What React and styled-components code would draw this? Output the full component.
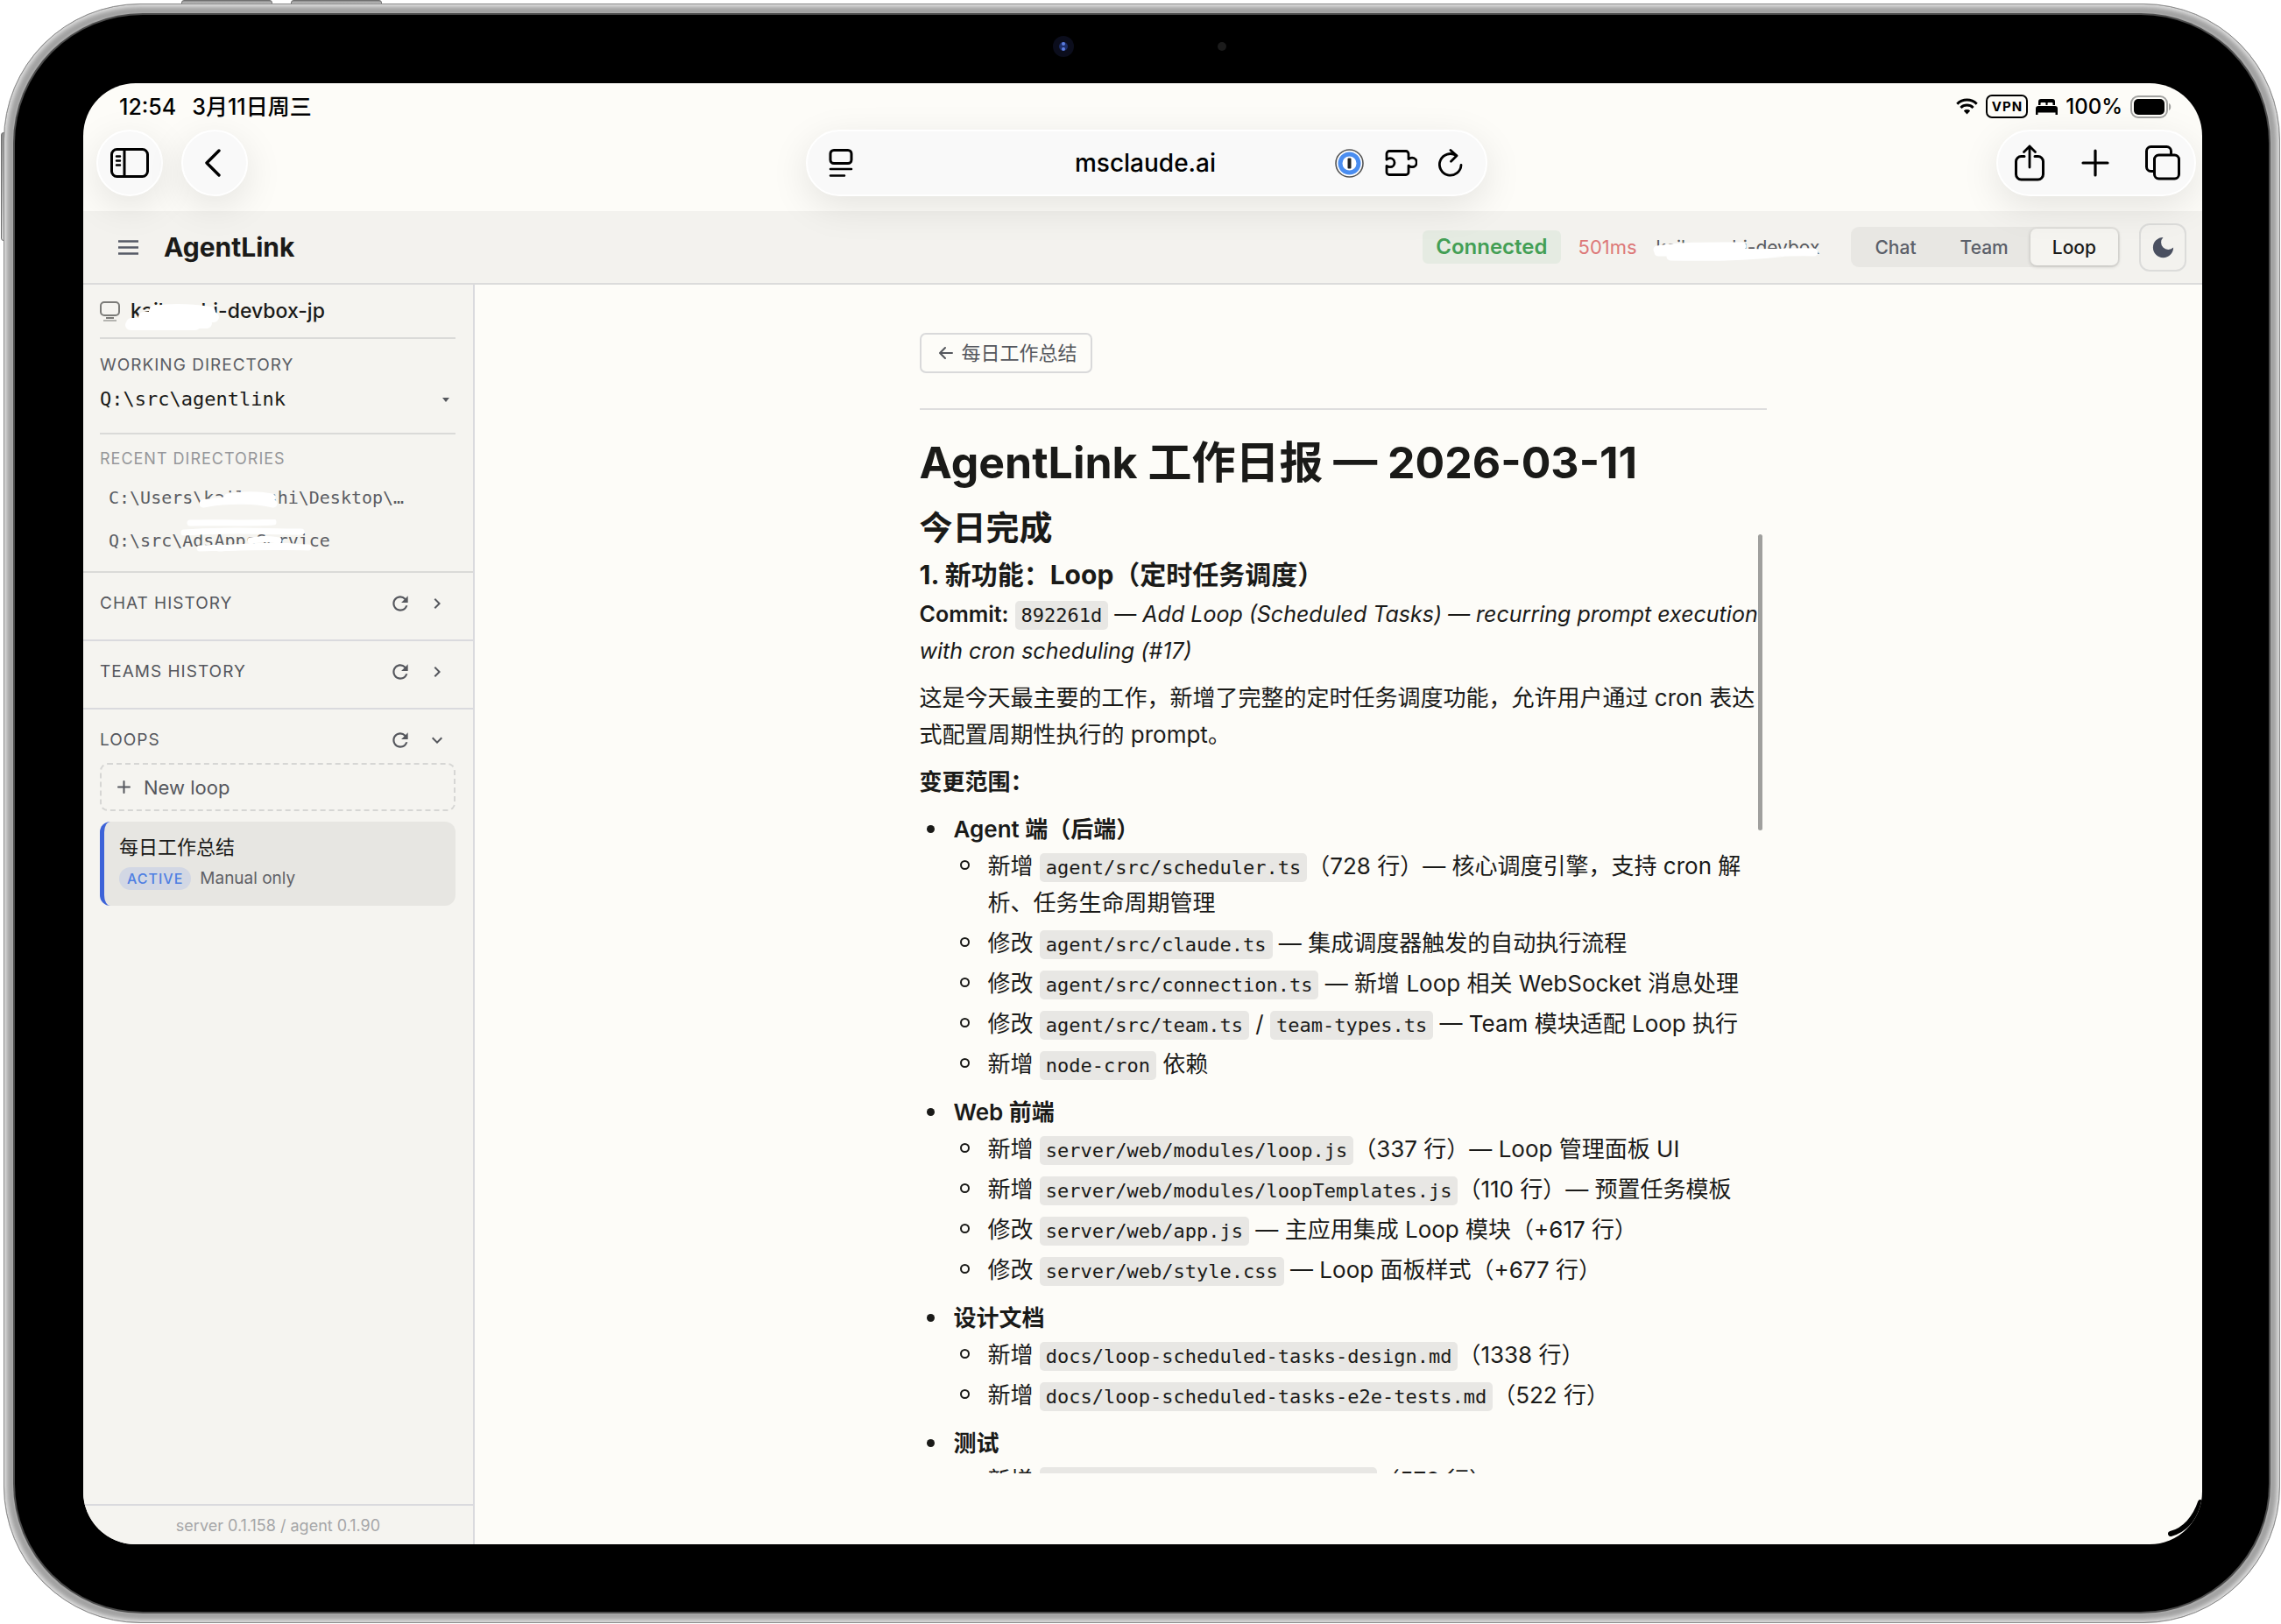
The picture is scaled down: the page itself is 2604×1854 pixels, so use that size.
import styled, { createGlobalStyle, css } from "styled-components";
import { MdRefresh, MdChevronRight, MdExpandMore } from "react-icons/md";

const sans = `Inter, "Noto Sans CJK SC", sans-serif`;
const mono = `"DejaVu Sans Mono", "Noto Sans CJK SC", monospace`;

const GlobalStyle = createGlobalStyle`
  *, *::before {
    box-sizing: border-box;
  }
  body {
    margin: 0;
    background: #fff;
    color: #1a1a18;
    font-family: ${sans};
  }
  button {
    font-family: inherit;
    border: 0;
    padding: 0;
    background: none;
    color: inherit;
    cursor: pointer;
  }
`;

/* ---------- device ---------- */

const Page = styled.div`
  position: relative;
  height: 100vh;
  padding: 4px 1px 1px 4px;
`;
const SideKey = styled.span`
  position: absolute;
  background: linear-gradient(#8d8d8d, #d4d4d4);
  border: 1px solid #6f6f6f;
  ${(p) => p.$top
    ? css`
      top: 0;
      left: ${p.$at}px;
      width: 104px;
      height: 6px;
      border-radius: 3px 3px 0 0;
    `
    : css`
      left: 1px;
      top: ${p.$at}px;
      width: 6px;
      height: 124px;
      border-radius: 3px 0 0 3px;
    `}
`;
const MetalFrame = styled.div`
  position: relative;
  height: 100%;
  padding: 12px;
  border-radius: 156px;
  border: 1px solid #8b8b8b;
  background: #a9a9a9;
  box-shadow: inset 0 0 4px 3px #dcdcdc, inset 0 0 0 9px #a2a2a2;
`;
const Bezel = styled.div`
  position: relative;
  height: 100%;
  padding: 78px 76px 77px 78px;
  border-radius: 146px;
  background: #000;
  box-shadow: 0 0 0 2px #4b4b4b;
`;
const Camera = styled.svg`
  position: absolute;
  top: 16px;
  left: 46%;
  width: 240px;
  height: 42px;
`;
const CornerMark = styled.svg`
  position: absolute;
  right: 0;
  bottom: 0;
  width: 44px;
  height: 56px;
  z-index: 3;
`;
const Screen = styled.div`
  position: relative;
  height: 100%;
  display: flex;
  flex-direction: column;
  overflow: hidden;
  border-radius: 60px;
  background: #fdfcf8;
`;

/* ---------- browser ---------- */

const StatusBar = styled.div`
  display: flex;
  justify-content: space-between;
  align-items: center;
  flex: none;
  height: 53px;
  padding: 0 35px 0 41px;
  font-size: 24px;
  line-height: 30px;
  font-weight: 500;
  color: #000;
`;
const StatusGroup = styled.div`
  display: flex;
  align-items: center;
  gap: ${(p) => p.$gap}px;
`;
const Clock = styled.span`
  font-size: 25px;
  line-height: 26px;
`;
const VpnTag = styled.span`
  height: 27px;
  padding: 0 4px 0 5px;
  border: 2px solid #000;
  border-radius: 7px;
  font-size: 15px;
  line-height: 23px;
  font-weight: 700;
  letter-spacing: 1px;
`;
const Toolbar = styled.nav`
  position: relative;
  z-index: 2;
  display: grid;
  grid-template-columns: 1fr minmax(0, 778px) 1fr;
  flex: none;
  height: 93px;
  padding: 0 7px 17px 15px;
`;
const glass = css`
  background: #f9f9f9;
  border: 2px solid #fff;
  border-radius: 38px;
  box-shadow: 0 12px 44px rgba(0, 0, 0, 0.1);
  color: #000;
`;
const ToolGroup = styled.div`
  display: flex;
  gap: 21px;
`;
const RoundButton = styled.button`
  ${glass}
  width: 76px;
  height: 76px;
  display: grid;
  place-items: center;
`;
const AddressBar = styled.div`
  ${glass}
  display: grid;
  grid-template-columns: 1fr auto 1fr;
  align-items: center;
  padding: 0 26px 0 24px;
  font-size: 28px;
  font-weight: 500;
`;
const AddressActions = styled.div`
  display: flex;
  justify-content: flex-end;
  align-items: center;
  gap: 24px;
`;
const PlainButton = styled.button`
  display: flex;
  align-items: center;
  justify-content: ${(p) => p.$align || "center"};
`;
const ActionPill = styled.div`
  ${glass}
  justify-self: end;
  width: 228px;
  display: flex;
  justify-content: space-between;
  align-items: center;
  padding: 0 16px 0 19px;
`;

/* ---------- app header ---------- */

const Header = styled.header`
  display: flex;
  align-items: center;
  flex: none;
  height: 84px;
  padding: 0 18px 0 40px;
  background: #f3f2ee;
  border-bottom: 2px solid #dbdbdb;
`;
const Brand = styled.h1`
  flex: 1;
  margin: 0 0 0 29px;
  font-size: 30px;
  line-height: 36px;
  font-weight: 700;
`;
const Connected = styled.span`
  padding: 0 15px;
  border-radius: 6px;
  background: #e5ebe2;
  color: #439f55;
  font-size: 24px;
  line-height: 38px;
  font-weight: 600;
`;
const Latency = styled.span`
  margin: 0 22px 0 20px;
  font-size: 22px;
  color: #dd7878;
`;
const HostName = styled.span`
  position: relative;
  margin-right: 36px;
  font-size: 21px;
  color: #57595e;
  white-space: pre;
`;
const Eraser = styled.svg`
  position: absolute;
  left: ${(p) => p.$left}px;
  top: ${(p) => p.$top}px;
  fill: none;
  stroke: #fff;
  stroke-linecap: round;
  stroke-linejoin: round;
`;
const Segments = styled.div`
  display: flex;
  height: 46px;
  padding: 2px;
  border-radius: 9px;
  background: #e8e7e3;
  margin-right: 22px;
`;
const Segment = styled.button`
  padding: 0 25px;
  border-radius: 7px;
  font-size: 21px;
  font-weight: 500;
  color: ${(p) => (p.$active ? "#1a1a18" : "#5b5f69")};
  ${(p) => p.$active && css`
    background: #f5f4f0;
    box-shadow: 0 1px 4px rgba(0, 0, 0, 0.22);
  `}
`;
const ThemeButton = styled.button`
  width: 54px;
  height: 55px;
  display: grid;
  place-items: center;
  border: 2px solid #dcdcda;
  border-radius: 12px;
`;

/* ---------- sidebar ---------- */

const Body = styled.div`
  display: flex;
  flex: 1;
  min-height: 0;
`;
const Sidebar = styled.aside`
  display: flex;
  flex-direction: column;
  flex: none;
  width: 447px;
  background: #f5f4f0;
  border-right: 2px solid #dadade;
`;
const SideTop = styled.div`
  padding: 0 20px 10px 19px;
  border-bottom: 2px solid #dadad8;
`;
const DeviceRow = styled.div`
  position: relative;
  display: flex;
  align-items: center;
  gap: 12px;
  height: 62px;
  border-bottom: 2px solid #dadad8;
  font-size: 23px;
  font-weight: 500;
  white-space: pre;
`;
const DirBlock = styled.div`
  padding: 16px 0 24px;
  border-bottom: 2px solid #dadad8;
`;
const SideLabel = styled.div`
  font-size: ${(p) => (p.$small ? 18 : 19)}px;
  line-height: 28px;
  letter-spacing: 1px;
  color: ${(p) => (p.$small ? "#96979a" : "#5b5d63")};
`;
const DirPicker = styled.button`
  display: flex;
  align-items: center;
  justify-content: space-between;
  width: 100%;
  margin-top: 11px;
  padding-right: 7px;
  font-family: ${mono};
  font-size: 22px;
  line-height: 28px;
`;
const RecentBlock = styled.div`
  padding-top: 14px;
`;
const RecentItem = styled.button`
  position: relative;
  display: block;
  width: 100%;
  padding-left: 10px;
  text-align: left;
  font-family: ${mono};
  font-size: 20px;
  line-height: 49px;
  color: #5b5d63;
  white-space: pre;
`;
const RecentList = styled.div`
  margin-top: 6px;
`;
const SideSection = styled.section`
  padding: 17px 20px ${(p) => (p.$open ? 0 : 23)}px 19px;
  border-bottom: ${(p) => (p.$open ? 0 : 2)}px solid #dadade;
`;
const SideHead = styled.div`
  display: flex;
  align-items: center;
  height: 36px;
  color: #55575d;
`;
const SideTitle = styled.h2`
  flex: 1;
  margin: 0;
  font-size: 19px;
  line-height: 28px;
  letter-spacing: 1px;
  font-weight: 400;
`;
const IconButton = styled.button`
  display: grid;
  place-items: center;
  width: 42px;
  height: 36px;
`;
const NewLoop = styled.button`
  display: flex;
  align-items: center;
  gap: 15px;
  width: 100%;
  height: 55px;
  margin-top: 8px;
  padding-left: 18px;
  border: 2px dashed #d6d6d4;
  border-radius: 9px;
  font-size: 22px;
  color: #55575d;
`;
const LoopItem = styled.button`
  display: flex;
  flex-direction: column;
  align-items: flex-start;
  width: 100%;
  height: 96px;
  margin-top: 12px;
  padding: 13px 17px;
  border-left: 5px solid #3d63d8;
  border-radius: 12px;
  background: #e7e6e2;
`;
const LoopName = styled.span`
  font-size: 22px;
  line-height: 32px;
`;
const LoopMeta = styled.span`
  display: flex;
  align-items: center;
  gap: 10px;
  margin-top: 7px;
  font-size: 19px;
  line-height: 26px;
  color: #5f6166;
`;
const ActiveBadge = styled.span`
  padding: 0 9px;
  border-radius: 13px;
  background: #d2d7e4;
  color: #4f7fe2;
  font-size: 16px;
  font-weight: 500;
  letter-spacing: 1px;
`;
const SideFooter = styled.footer`
  margin-top: auto;
  height: 46px;
  border-top: 2px solid #dadade;
  text-align: center;
  font-size: 18px;
  line-height: 46px;
  color: #a5a6a8;
`;

/* ---------- report ---------- */

const Main = styled.main`
  flex: 1;
  min-width: 0;
  display: flex;
  justify-content: center;
  padding: 55px 0 81px 10px;
`;
const Column = styled.div`
  position: relative;
  width: 967px;
  max-width: 100%;
  overflow: hidden;
`;
const ReportHead = styled.div`
  padding-bottom: 40px;
  border-bottom: 2px solid #dedede;
`;
const BackButton = styled.button`
  display: flex;
  align-items: center;
  gap: 9px;
  height: 46px;
  padding: 0 15px 0 19px;
  border: 2px solid #d9d9da;
  border-radius: 7px;
  font-size: 22px;
  line-height: 26px;
  color: #55575d;
`;
const ScrollThumb = styled.span`
  position: absolute;
  right: 5px;
  top: 230px;
  width: 5px;
  height: 338px;
  border-radius: 3px;
  background: #a0a09e;
`;
const Report = styled.article`
  font-size: 26px;
  line-height: 42px;

  h1 {
    margin: 30px 0 19px;
    font-size: 50px;
    line-height: 60px;
  }
  h2 {
    margin: 0 0 8px;
    font-size: 38px;
    line-height: 50px;
  }
  h3 {
    margin: 0 0 3px;
    font-size: 30px;
    line-height: 42px;
  }
  p {
    margin: 0 0 12px;
  }
  ul {
    margin: 0;
    padding-left: 39px;
    list-style: none;
  }
  strong {
    font-weight: 600;
  }
`;
const CommitLine = styled.p`
  font-size: 25px;
`;
const Group = styled.li`
  position: relative;
  margin-bottom: 13px;

  &::before {
    content: "";
    position: absolute;
    left: -31px;
    top: 16px;
    width: 9px;
    height: 9px;
    border-radius: 50%;
    background: #1a1a18;
  }
`;
const Change = styled.li`
  position: relative;

  & + & {
    margin-top: 4px;
  }
  &::before {
    content: "";
    position: absolute;
    left: -32px;
    top: 14px;
    width: 11px;
    height: 11px;
    border: 2px solid #1a1a18;
    border-radius: 50%;
  }
`;
const Code = styled.code`
  padding: 4px 7px;
  border-radius: 5px;
  background: #e8e7e4;
  font-family: ${mono};
  font-size: 22px;
  line-height: 1;
`;

/* ---------- icons ---------- */

const Line = ({ w, h, sw = 3, box, children }) => (
  <svg width={w} height={h} viewBox={box || `0 0 ${w} ${h}`} fill="none" stroke="currentColor"
    strokeWidth={sw} strokeLinecap="round" strokeLinejoin="round" aria-hidden="true">
    {children}
  </svg>
);

const SidebarIcon = () => (
  <Line w={44} h={34}>
    <rect x="1.5" y="1.5" width="41" height="31" rx="6" />
    <path d="M16 2v30" />
    <path d="M7 9.500h4M7 14.500h4M7 19.500h4" strokeWidth="2.500" />
  </Line>
);
const ReaderIcon = () => (
  <Line w={28} h={32}>
    <rect x="2" y="1.500" width="24" height="15" rx="4" />
    <path d="M2 23h24M2 30.500h16" strokeWidth="2.600" />
  </Line>
);
const PasswordIcon = () => (
  <svg width="33" height="33" viewBox="0 0 33 33" aria-hidden="true">
    <circle cx="16.500" cy="16.500" r="15.500" fill="#fff" stroke="#555" strokeWidth="1.600" />
    <circle cx="16.500" cy="16.500" r="10.500" fill="#fff" stroke="#4a8df0" strokeWidth="5" />
    <rect x="14.500" y="10.500" width="4" height="12" rx="1" fill="#222" />
  </svg>
);
const PuzzleIcon = () => (
  <Line w={37} h={30} sw={2.8}>
    <path d="M5 1.500h19a3 3 0 0 1 3 3v6.200c1.500-1.200 2.500-1.500 4-1.500a4.800 4.800 0 0 1 0 10.500c-1.500 0-2.500-.4-4-1.600v7.400a3 3 0 0 1-3 3H5a3 3 0 0 1-3-3v-7.200c1.500 1.200 2.500 1.400 4 1.400a4.800 4.800 0 0 0 0-10c-1.500 0-2.500.4-4 1.500V4.500a3 3 0 0 1 3-3z" />
  </Line>
);
const ReloadIcon = () => (
  <Line w={28} h={33} sw={2.8}>
    <path d="M20.500 7.600A12.300 12.300 0 1 0 26 18.500" />
    <path d="M14 1.500l7 6.300-6.500 6.500" />
  </Line>
);
const ShareIcon = () => (
  <Line w={34} h={42}>
    <path d="M11 13.500H7.500a6 6 0 0 0-6 6V34a6 6 0 0 0 6 6h19a6 6 0 0 0 6-6V19.500a6 6 0 0 0-6-6H23" />
    <path d="M17 26V2M10.500 8.500L17 2l6.500 6.500" strokeWidth="2.800" />
  </Line>
);
const TabsIcon = () => (
  <Line w={40} h={40}>
    <rect x="10.500" y="11" width="28" height="27" rx="5" />
    <path d="M10 29.500H6.500a5 5 0 0 1-5-5V6.500a5 5 0 0 1 5-5h18a5 5 0 0 1 5 5V10" />
  </Line>
);
const WifiIcon = () => (
  <svg width="25" height="19" viewBox="0 0 25 19" fill="none" stroke="#000" strokeWidth="3" aria-hidden="true">
    <path d="M1.300 6.700a15.800 15.800 0 0 1 22.400 0" />
    <path d="M5.400 11a10.200 10.200 0 0 1 14.200 0" />
    <path d="M12.500 18.500l-3.700-4a5.400 5.400 0 0 1 7.400 0z" fill="#000" stroke="none" />
  </svg>
);
const BedIcon = () => (
  <svg width="25" height="18" viewBox="0 0 25 18" aria-hidden="true">
    <path d="M3 7V3a3 3 0 0 1 3-3h13a3 3 0 0 1 3 3v4h-2.500V5a1 1 0 0 0-1-1h-4a1 1 0 0 0-1 1v2h-2V5a1 1 0 0 0-1-1h-4a1 1 0 0 0-1 1v2z" />
    <path d="M0 11a3 3 0 0 1 3-3h19a3 3 0 0 1 3 3v7h-2.500v-2.500h-20V18H0z" />
  </svg>
);
const BatteryIcon = () => (
  <svg width="47" height="26" viewBox="0 0 47 26" aria-hidden="true">
    <rect x="1" y="1" width="41" height="24" rx="8" fill="none" stroke="#a2a2a0" strokeWidth="2" />
    <rect x="4" y="4" width="35" height="18" rx="5" fill="#000" />
    <path d="M44 9c3 1 3 7 0 8z" fill="#a2a2a0" />
  </svg>
);
const MonitorIcon = () => (
  <svg width="23" height="23" viewBox="0 0 23 23" fill="none" stroke="#7b7b78" strokeWidth="2" aria-hidden="true">
    <rect x="1" y="1" width="21" height="15" rx="4" />
    <path d="M7 19h9" />
    <path d="M4 22h15" stroke="#b4b4b0" />
  </svg>
);
const MoonIcon = () => (
  <svg width="31" height="31" viewBox="0 0 24 24" fill="#4a5060" aria-hidden="true">
    <path d="M12 3a6 6 0 0 0 9 9 9 9 0 1 1-9-9Z" />
  </svg>
);

/* ---------- data ---------- */

const groups = [
  {
    title: "Agent 端（后端）",
    items: [
      ["新增 ", { c: "agent/src/scheduler.ts" }, "（728 行）— 核心调度引擎，支持 cron 解析、任务生命周期管理"],
      ["修改 ", { c: "agent/src/claude.ts" }, " — 集成调度器触发的自动执行流程"],
      ["修改 ", { c: "agent/src/connection.ts" }, " — 新增 Loop 相关 WebSocket 消息处理"],
      ["修改 ", { c: "agent/src/team.ts" }, " / ", { c: "team-types.ts" }, " — Team 模块适配 Loop 执行"],
      ["新增 ", { c: "node-cron" }, " 依赖"],
    ],
  },
  {
    title: "Web 前端",
    items: [
      ["新增 ", { c: "server/web/modules/loop.js" }, "（337 行）— Loop 管理面板 UI"],
      ["新增 ", { c: "server/web/modules/loopTemplates.js" }, "（110 行）— 预置任务模板"],
      ["修改 ", { c: "server/web/app.js" }, " — 主应用集成 Loop 模块（+617 行）"],
      ["修改 ", { c: "server/web/style.css" }, " — Loop 面板样式（+677 行）"],
    ],
  },
  {
    title: "设计文档",
    items: [
      ["新增 ", { c: "docs/loop-scheduled-tasks-design.md" }, "（1338 行）"],
      ["新增 ", { c: "docs/loop-scheduled-tasks-e2e-tests.md" }, "（522 行）"],
    ],
  },
  {
    title: "测试",
    items: [["新增 ", { c: "test/agent/scheduler.test.ts" }, "（578 行）"]],
  },
];

const SectionHead = ({ title, open }) => (
  <SideHead>
    <SideTitle>{title}</SideTitle>
    <IconButton aria-label={`Refresh ${title}`}><MdRefresh size={26} /></IconButton>
    <IconButton aria-label={`Toggle ${title}`}>
      {open ? <MdExpandMore size={24} /> : <MdChevronRight size={24} />}
    </IconButton>
  </SideHead>
);

const Browser = () => (
  <>
    <StatusBar>
      <StatusGroup $gap={18}>
        <Clock>12:54</Clock>
        <Clock>3月11日周三</Clock>
      </StatusGroup>
      <StatusGroup $gap={9}>
        <WifiIcon />
        <VpnTag>VPN</VpnTag>
        <BedIcon />
        <span>100%</span>
        <BatteryIcon />
      </StatusGroup>
    </StatusBar>
    <Toolbar>
      <ToolGroup>
        <RoundButton aria-label="Sidebar"><SidebarIcon /></RoundButton>
        <RoundButton aria-label="Back">
          <Line w={24} h={32} sw={3.4}><path d="M17 2L3 16l14 14" /></Line>
        </RoundButton>
      </ToolGroup>
      <AddressBar>
        <PlainButton $align="flex-start" aria-label="Reader"><ReaderIcon /></PlainButton>
        <span>msclaude.ai</span>
        <AddressActions>
          <PlainButton aria-label="Password"><PasswordIcon /></PlainButton>
          <PlainButton aria-label="Extensions"><PuzzleIcon /></PlainButton>
          <PlainButton aria-label="Reload"><ReloadIcon /></PlainButton>
        </AddressActions>
      </AddressBar>
      <ActionPill>
        <PlainButton aria-label="Share"><ShareIcon /></PlainButton>
        <PlainButton aria-label="New tab">
          <Line w={32} h={32} sw={3.2}><path d="M16 2v28M2 16h28" /></Line>
        </PlainButton>
        <PlainButton aria-label="Tabs"><TabsIcon /></PlainButton>
      </ActionPill>
    </Toolbar>
  </>
);

const AppHeader = () => (
  <Header>
    <PlainButton aria-label="Menu">
      <svg width="23" height="17" viewBox="0 0 23 17" stroke="#555a66" strokeWidth="2.500">
        <path d="M0 1.500h23M0 8.500h23M0 15.500h23" />
      </svg>
    </PlainButton>
    <Brand>AgentLink</Brand>
    <Connected>Connected</Connected>
    <Latency>501ms</Latency>
    <HostName>
      {"kail         hi-devbox"}
      <Eraser $left={-6} $top={4} width="198" height="26">
        <path d="M7 11C40 6 70 7 104 7M8 14h90c30 2 62-1 88 0M22 19c50 1 100-1 132-5" strokeWidth="9" />
      </Eraser>
    </HostName>
    <Segments>
      <Segment>Chat</Segment>
      <Segment>Team</Segment>
      <Segment $active>Loop</Segment>
    </Segments>
    <ThemeButton aria-label="Dark mode"><MoonIcon /></ThemeButton>
  </Header>
);

const SidePanel = () => (
  <Sidebar>
    <SideTop>
      <DeviceRow>
        <MonitorIcon />
        <span>{"kail       hi-devbox-jp"}</span>
        <Eraser $left={26} $top={20} width="128" height="34">
          <path d="M36 10C55 7 80 8 100 11M24 17h80M10 24h86M9 26h74" strokeWidth="12" />
        </Eraser>
      </DeviceRow>
      <DirBlock>
        <SideLabel>WORKING DIRECTORY</SideLabel>
        <DirPicker>
          <span>Q:\src\agentlink</span>
          <svg width="8" height="5" viewBox="0 0 8 5" fill="#55575d"><path d="M0 0h8L4 5z" /></svg>
        </DirPicker>
      </DirBlock>
      <RecentBlock>
        <SideLabel $small>RECENT DIRECTORIES</SideLabel>
        <RecentList>
          <RecentItem>
            {"C:\\Users\\kail  shi\\Desktop\\…"}
            <Eraser $left={110} $top={12} width="104" height="28">
              <path d="M36 12C60 8 76 10 86 12M8 19C40 13 70 15 88 19" strokeWidth="9" />
            </Eraser>
          </RecentItem>
          <RecentItem>
            {"Q:\\src\\AdsAppsService"}
            <Eraser $left={86} $top={0} width="170" height="46">
              <path d="M17 4C50 3 80 5 112 3M10 15c50-4 90-1 134-1M28 33c40-1 90-2 124-1" strokeWidth="7" />
              <path d="M86 24c12-2 24-2 32 0M50 33c40-2 60-4 86-2" strokeWidth="7" />
            </Eraser>
          </RecentItem>
        </RecentList>
      </RecentBlock>
    </SideTop>
    <SideSection><SectionHead title="CHAT HISTORY" /></SideSection>
    <SideSection><SectionHead title="TEAMS HISTORY" /></SideSection>
    <SideSection $open>
      <SectionHead title="LOOPS" open />
      <NewLoop>
        <Line w={15} h={15} sw={2}><path d="M7.500 1v13M1 7.500h13" /></Line>
        New loop
      </NewLoop>
      <LoopItem>
        <LoopName>每日工作总结</LoopName>
        <LoopMeta>
          <ActiveBadge>ACTIVE</ActiveBadge>
          Manual only
        </LoopMeta>
      </LoopItem>
    </SideSection>
    <SideFooter>server 0.1.158 / agent 0.1.90</SideFooter>
  </Sidebar>
);

const ReportView = () => (
  <Main>
    <Column>
      <ReportHead>
        <BackButton>
          <Line w={18} h={18} sw={2}><path d="M16 9H3M8 3L2 9l6 6" /></Line>
          每日工作总结
        </BackButton>
      </ReportHead>
      <Report>
        <h1>AgentLink 工作日报 — 2026-03-11</h1>
        <h2>今日完成</h2>
        <h3>1. 新功能：Loop（定时任务调度）</h3>
        <CommitLine>
          <strong>Commit:</strong> <Code>892261d</Code> —{" "}
          <em>Add Loop (Scheduled Tasks) — recurring prompt execution with cron scheduling (#17)</em>
        </CommitLine>
        <p>
          这是今天最主要的工作，新增了完整的定时任务调度功能，允许用户通过 cron 表达式配置周期性执行的 prompt。
        </p>
        <p><strong>变更范围：</strong></p>
        <ul>
          {groups.map((g) => (
            <Group key={g.title}>
              <strong>{g.title}</strong>
              <ul>
                {g.items.map((parts, i) => (
                  <Change key={i}>
                    {parts.map((t, j) => (t.c ? <Code key={j}>{t.c}</Code> : t))}
                  </Change>
                ))}
              </ul>
            </Group>
          ))}
        </ul>
      </Report>
      <ScrollThumb />
    </Column>
  </Main>
);

const App = () => (
  <Page>
    <GlobalStyle />
    <SideKey $top $at={207} />
    <SideKey $top $at={332} />
    <SideKey $at={151} />
    <MetalFrame>
      <Bezel>
        <Camera viewBox="0 0 240 42">
          <circle cx="13" cy="20" r="12" fill="#0b0d1c" />
          <circle cx="13" cy="20" r="5" fill="#1c2c66" />
          <circle cx="13" cy="17" r="2" fill="#5b7ce0" />
          <circle cx="13" cy="23" r="2" fill="#5b7ce0" />
          <circle cx="194" cy="20" r="5" fill="#1b1b1b" />
        </Camera>
        <Screen>
          <Browser />
          <AppHeader />
          <Body>
            <SidePanel />
            <ReportView />
          </Body>
          <CornerMark viewBox="0 0 44 56">
            <path d="M8 44C24 40 36 26 42 8" fill="none" stroke="#000" strokeWidth="6" strokeLinecap="round" />
          </CornerMark>
        </Screen>
      </Bezel>
    </MetalFrame>
  </Page>
);

export default App;
